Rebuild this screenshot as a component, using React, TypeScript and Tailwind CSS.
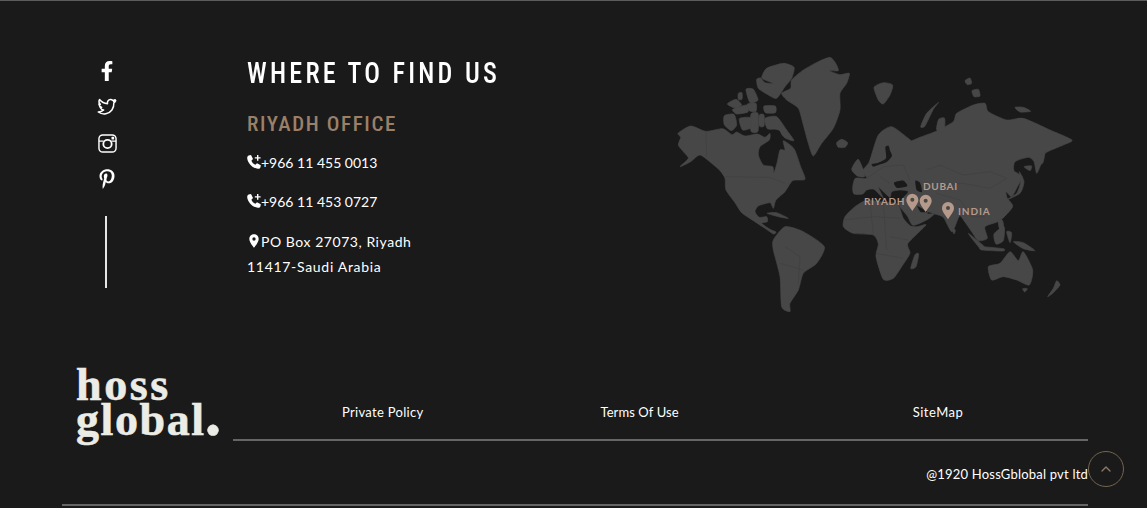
import { ChevronUp } from 'lucide-react';
import { FaFacebookF, FaPinterestP } from 'react-icons/fa';
import { MdLocationOn } from 'react-icons/md';

const bodyFont = "font-['Lato','Liberation_Sans',sans-serif]";
const headFont = "font-['Liberation_Sans_Narrow','Roboto_Condensed','Liberation_Sans',sans-serif]";

// land outlines as x y pairs, traced on a 3x grid of the map box
const land = [
  // north america
  '30 350 55 325 40 305 25 285 32 262 24 250 62 228 108 244 158 236 186 254 200 246 225 258 262 252 285 262 300 250 298 270 270 290 265 315 280 345 308 350 312 368 322 335 330 300 345 300 340 272 372 296 392 350 405 388 368 392 345 425 318 450 310 475 300 458 265 468 255 485 268 502 290 500 292 515 275 520 300 538 318 546 310 552 285 535 250 512 215 488 195 458 168 420 165 385 150 362 125 340 90 315 62 335',
  // greenland
  '365 90 400 60 445 35 480 22 497 40 505 62 478 62 510 74 538 70 530 100 510 130 510 180 490 235 455 280 430 318 415 280 400 225 385 175 350 150 335 130 362 115',
  // ellesmere
  '275 82 290 55 340 40 372 52 365 85 345 110 320 145 295 135 265 115 260 88 272 84 285 98 310 100 285 90',
  // arctic islands
  '285 205 320 200 350 240 372 272 345 264 322 240 292 236',
  '172 162 198 148 215 165 195 174',
  '188 178 230 165 234 186 200 192',
  '205 130 216 128 216 148 205 148',
  '163 197 192 193 200 225 184 242 163 224',
  '208 206 242 203 246 232 218 240',
  '228 118 250 118 264 150 240 158',
  '232 162 258 160 258 184 238 182',
  '243 192 264 190 264 244 243 244',
  '282 168 316 168 316 188 286 188',
  '268 195 282 195 282 228 268 228',
  // iceland, svalbard
  '500 278 515 268 533 278 525 292 505 292',
  '612 112 640 98 668 105 660 135 640 162 625 150',
  // eurasia
  '548 412 556 385 590 385 578 362 598 335 625 255 665 230 715 265 725 272 750 262 800 243 850 215 860 190 910 165 945 160 955 185 1010 210 1060 205 1140 240 1206 270 1180 285 1125 310 1112 345 1100 370 1092 335 1075 322 1035 335 1032 362 1056 380 1040 415 1025 440 1008 425 1012 445 1028 470 990 512 945 530 952 565 925 572 905 545 882 512 868 498 846 546 820 502 795 492 776 486 772 492 793 492 770 510 729 526 712 498 688 468 692 452 715 425 690 420 665 425 660 442 640 425 625 412 640 445 612 418 590 420 578 432 552 432',
  // africa
  '682 462 625 455 590 450 555 470 525 500 520 530 550 550 610 555 625 582 618 620 640 688 670 685 695 650 720 610 714 580 768 525 742 530 722 528 700 505',
  // south america
  '310 570 345 530 400 545 463 590 440 640 400 670 385 720 360 760 360 785 335 770 330 680 310 600',
  // islands
  '545 358 565 328 585 378 562 378',
  '722 655 735 614 746 612 738 650',
  '291 490 320 488 355 505 325 500',
  '885 92 900 84 905 100 892 104',
  '906 122 925 118 930 138 912 140',
  '752 230 770 190 806 157 790 178 765 228',
  '800 240 806 208 824 205 822 248',
  '1035 172 1060 172 1082 184 1050 186',
  '1098 345 1112 318 1125 305 1118 340',
  '1005 452 1040 430 1052 395 1048 365 1062 395 1050 430',
  '1062 350 1085 348 1080 362',
  '846 536 856 540 852 552',
  '895 550 945 592 930 595',
  '932 590 1000 596 998 603 935 600',
  '972 552 1002 530 1000 572 978 582',
  '985 510 998 512 1002 545 988 535',
  '1010 545 1025 548 1020 578',
  '1030 575 1060 578 1095 602 1060 596',
  '955 650 990 640 1020 605 1045 632 1060 605 1088 660 1078 705 1040 690 1000 680 965 690',
  '1058 716 1072 716 1064 726',
  '1133 740 1150 715 1160 692 1170 705 1150 728',
];

// inland seas laid back over the land
const seas = [
  '672 398 700 392 712 408 682 414',
  '736 392 750 398 756 426 740 420',
  '742 468 760 478 772 486 752 486',
  '304 240 328 242 336 265 318 280 304 262',
  '605 342 625 338 648 325 646 292 656 288 660 302 666 318 650 336 625 345 610 350',
];

const borders = [
  'M165 380 L300 382 L345 400',
  'M108 244 L110 320',
  'M520 510 L610 500 L690 505 M600 455 L610 555 M640 460 L650 600 M660 560 L715 570 M620 610 L700 625',
  'M345 590 L390 620 L385 700 M330 640 L400 660',
  'M770 360 L810 345 L880 375 L960 365 L1010 385 L960 415 L880 400 L790 405',
  'M590 385 L640 350 L700 345 L720 390 M630 380 L660 400',
  'M800 430 L870 450 L905 500 L945 500',
];

const pins = [
  { x: 727, y: 457 },
  { x: 767, y: 460 },
  { x: 834, y: 482 },
];

// closed catmull-rom through the traced points so the coasts aren't angular
function smooth(points: string) {
  const n = points.split(' ').map(Number);
  const p: [number, number][] = [];
  for (let i = 0; i < n.length; i += 2) p.push([n[i], n[i + 1]]);
  const at = (i: number) => p[(i + p.length) % p.length];
  const k = 0.11;
  let d = `M${p[0][0]} ${p[0][1]}`;
  for (let i = 0; i < p.length; i++) {
    const [a, b, c, e] = [at(i - 1), at(i), at(i + 1), at(i + 2)];
    d += ` C${b[0] + (c[0] - a[0]) * k} ${b[1] + (c[1] - a[1]) * k} ${c[0] - (e[0] - b[0]) * k} ${c[1] - (e[1] - b[1]) * k} ${c[0]} ${c[1]}`;
  }
  return d + ' Z';
}

function Pin({ x, y }: { x: number; y: number }) {
  return (
    <g transform={`translate(${x} ${y})`}>
      <path
        d="M0 26 C-8 12 -18 4 -18 -8 A18 18 0 1 1 18 -8 C18 4 8 12 0 26 Z"
        fill="#b59a8c"
      />
      <circle cx="0" cy="-8" r="6" fill="#4a4644" />
    </g>
  );
}

function WorldMap() {
  return (
    <div className="relative w-[410px] h-[270px] shrink-0">
      <svg viewBox="0 0 1230 810" className="w-full h-full blur-[0.4px]">
        <g fill="#474747" stroke="#474747" strokeWidth="2" strokeLinejoin="round">
          {land.map((d) => (
            <path key={d} d={smooth(d)} />
          ))}
        </g>
        <g fill="#1a1a1a">
          {seas.map((d) => (
            <path key={d} d={smooth(d)} />
          ))}
        </g>
        <g fill="none" stroke="#3d4041" strokeWidth="2">
          {borders.map((d) => (
            <path key={d} d={d} />
          ))}
        </g>
        {pins.map((p) => (
          <Pin key={p.x} x={p.x} y={p.y} />
        ))}
      </svg>
      <span className={`${bodyFont} absolute left-[194px] top-[144px] text-[10px] leading-[14px] font-bold tracking-[0.6px] text-[#b59a8c]`}>RIYADH</span>
      <span className={`${bodyFont} absolute left-[253px] top-[129px] text-[10px] leading-[14px] font-bold tracking-[0.7px] text-[#b59a8c]`}>DUBAI</span>
      <span className={`${bodyFont} absolute left-[288px] top-[154px] text-[10px] leading-[14px] font-bold tracking-[0.9px] text-[#b59a8c]`}>INDIA</span>
    </div>
  );
}

function TwitterOutline() {
  return (
    <svg viewBox="0 0 24 24" className="w-[20px] h-[20px]" fill="none" stroke="white" strokeWidth="1.8" strokeLinejoin="round">
      <path d="M22.5 4.5 C21.6 5 20.8 5.2 20 5.4 C20.8 4.8 21.5 4 21.8 3.2 C21 3.7 20 4.1 19 4.3 C17.4 2.6 14.6 2.8 13.3 4.5 C12.5 5.6 12.3 6.8 12.6 8 C9 7.8 5.4 6 3 3 C2 5 2.4 7.4 4 8.8 L2.2 8.3 C2.4 10.4 3.6 11.8 5.6 12.6 L3.8 12.6 C4.6 14.4 6 15.4 8 15.6 C6.2 17.2 4 18 1.5 18 C4 19.8 7.4 20.8 10.6 20.2 C16.8 19 20.6 13.4 20.2 7.2 C21 6.6 21.9 5.6 22.5 4.5 Z" />
    </svg>
  );
}

function InstagramOld() {
  return (
    <svg viewBox="0 0 20 20" className="w-[19px] h-[19px]" fill="none" stroke="white" strokeWidth="1.5">
      <rect x="1" y="1" width="18" height="18" rx="4" />
      <path d="M1 7.5 H6 M14 7.5 H19" />
      <circle cx="10" cy="10.5" r="4.4" strokeWidth="1.9" />
      <rect x="14.2" y="3" width="2.8" height="2.8" rx="0.6" fill="white" stroke="none" />
    </svg>
  );
}

function PhonePlus() {
  return (
    <svg viewBox="0 0 16 16" className="w-[16px] h-[16px] shrink-0 -ml-[1px]" fill="white">
      <path d="M2.6 1.6 L5 1 L7 5 L5.4 6.8 C6.2 8.8 7.4 10 9.4 10.8 L11 9.2 L14.8 11.2 L14.4 13.6 C14 14.6 13 15 12 14.8 C6.6 14.2 1.8 9.4 1.2 4.2 C1.2 3 1.6 2.2 2.6 1.6 Z" />
      <path d="M11 1 H12.4 V3.2 H14.6 V4.6 H12.4 V6.8 H11 V4.6 H8.8 V3.2 H11 Z" />
    </svg>
  );
}

function PhoneLine({ number, className }: { number: string; className: string }) {
  return (
    <p className={`flex items-center h-[20px] text-[14px] ${className}`}>
      <PhonePlus />
      <span className="-ml-[1px]">{number}</span>
    </p>
  );
}

export default function App() {
  return (
    <div className={`${bodyFont} h-[508px] w-[1147px] overflow-hidden bg-[#1a1a1a] border-t border-[#5c5c5c] text-white relative`}>
      <div className="flex h-[364px]">
        <div className="w-[247px] shrink-0 pl-[97px] pt-[60px]">
          <div className="flex flex-col items-center w-[20px] gap-[16px]">
            <div className="h-[20px] flex items-center"><FaFacebookF className="w-[20px] h-[20px] text-white" /></div>
            <div className="h-[20px] flex items-center"><TwitterOutline /></div>
            <div className="h-[20px] flex items-center"><InstagramOld /></div>
            <div className="h-[20px] flex items-center"><FaPinterestP className="w-[20px] h-[20px] text-white" /></div>
          </div>
          <div className="w-[2px] h-[72px] bg-[#e6e6e6] ml-[8px] mt-[27px]" />
        </div>

        <div className="w-[423px] shrink-0 pt-[54px]">
          <h2 className={`${headFont} origin-left scale-x-[0.9] text-[29px] leading-[36px] tracking-[3.6px] font-medium whitespace-nowrap`}>WHERE TO FIND US</h2>
          <h3 className={`${headFont} text-[21px] leading-[30px] tracking-[1.6px] font-medium text-[#9b8069] mt-[18px] whitespace-nowrap`}>RIYADH OFFICE</h3>
          <PhoneLine number="+966 11 455 0013" className="mt-[13px]" />
          <PhoneLine number="+966 11 453 0727" className="mt-[19px]" />
          <p className="flex items-center h-[20px] text-[14px] tracking-[0.55px] mt-[20px] whitespace-nowrap">
            <MdLocationOn className="w-[16px] h-[16px] -ml-[1px] -mr-[1px] shrink-0" />
            PO Box 27073, Riyadh
          </p>
          <p className="h-[20px] leading-[20px] text-[14px] tracking-[0.7px] mt-[6px] whitespace-nowrap">11417-Saudi Arabia</p>
        </div>

        <div className="pt-[49px]">
          <WorldMap />
        </div>
      </div>

      <div className="flex">
        <div className="w-[233px] shrink-0 pl-[76px] pt-[2px] font-['Liberation_Serif',serif] font-bold text-[46px] leading-[35px] text-[#ecece6] [-webkit-text-stroke:0.6px_#ecece6] whitespace-nowrap">
          <div className="tracking-[2.6px]">hoss</div>
          <div className="tracking-[1.6px]">global<span className="text-[66px] leading-[0px] -ml-[1px]">.</span></div>
        </div>
        <div className="w-[855px]">
          <div className="flex h-[76px] pt-[38px] border-b-2 border-[#666666] text-[13px] tracking-[0.3px] leading-[18px] whitespace-nowrap">
            <a className="ml-[109px]">Private Policy</a>
            <a className="ml-[177px] tracking-[0.1px]">Terms Of Use</a>
            <a className="ml-[234px] tracking-[0.5px]">SiteMap</a>
          </div>
          <p className="text-right text-[13px] tracking-[0.2px] leading-[18px] mt-[24px] whitespace-nowrap">@1920 HossGblobal pvt ltd</p>
        </div>
      </div>

      <div className="h-[2px] w-[1026px] ml-[62px] bg-[#666666] mt-[21px]" />

      <button className="absolute left-[1088px] top-[450px] w-[36px] h-[36px] rounded-full border border-[#75654f] flex items-center justify-center">
        <ChevronUp className="w-[16px] h-[16px] text-[#8a7a68]" />
      </button>
    </div>
  );
}
